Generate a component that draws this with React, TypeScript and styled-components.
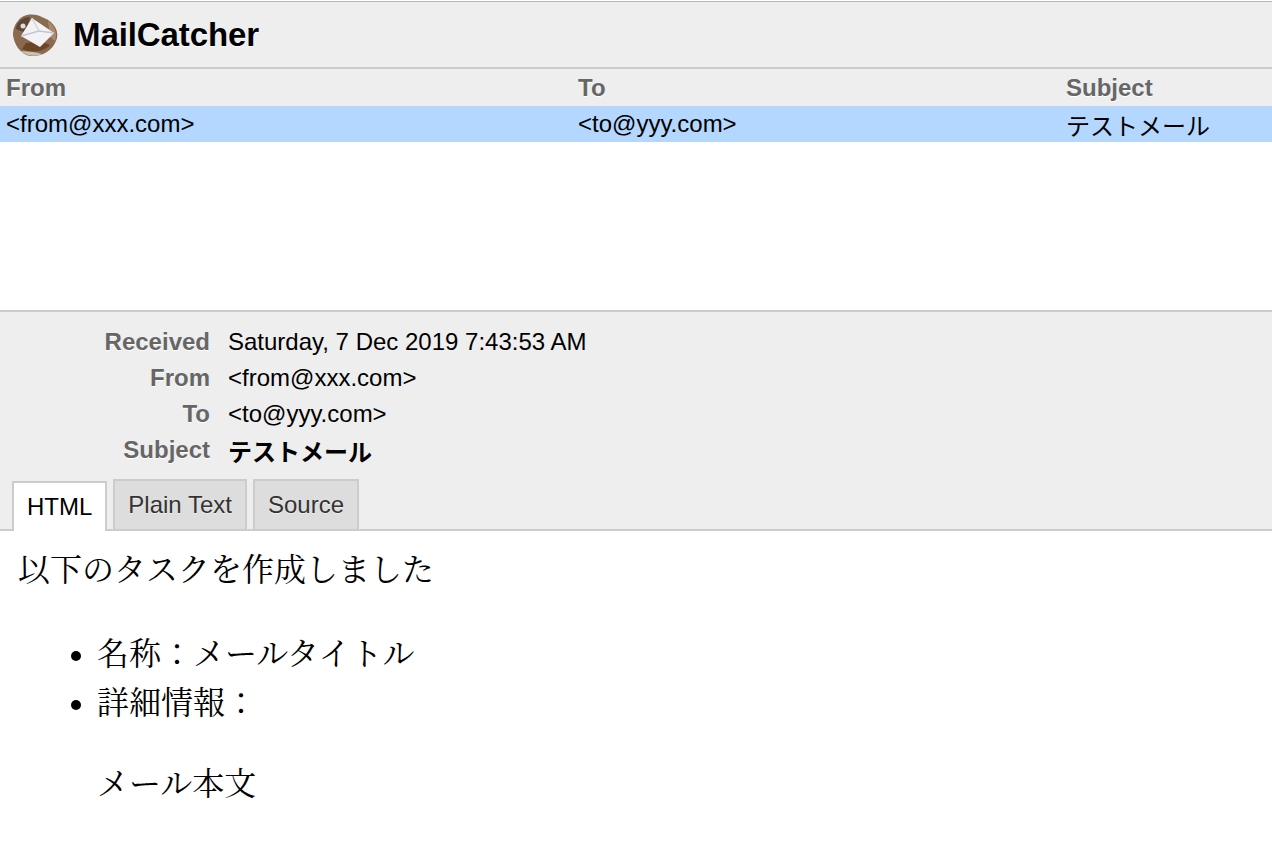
import React, { FC } from "react";
import styled, { createGlobalStyle } from "styled-components";

const GlobalStyle = createGlobalStyle`
  html, body {
    margin: 0;
    background: white;
    color: black;
    font-family: "Liberation Sans", "Noto Sans CJK JP", sans-serif;
  }
`;

const Page = styled.div`
  width: 1272px;
  height: 852px;
  overflow: hidden;
  display: flex;
  flex-direction: column;
`;

const Header = styled.header`
  height: 66px;
  margin-top: 1px;
  box-sizing: border-box;
  background: #eeeeee;
  border-top: 1px solid #b5b5b5;
  display: flex;
  align-items: center;
  gap: 13px;
  padding-left: 12px;
`;

const Title = styled.h1`
  margin: 0;
  font-size: 33px;
  font-weight: bold;
  letter-spacing: -0.1px;
  text-shadow: 0 1px 0 #ffffff;
`;

const ListArea = styled.section`
  height: 243px;
  box-sizing: border-box;
  border-top: 2px solid #cccccc;
  background: white;
`;

const columns = "572px 488px 1fr";

const ListHead = styled.div`
  display: grid;
  grid-template-columns: ${columns};
  height: 37px;
  align-items: center;
  background: #eeeeee;
`;

const HeadCell = styled.div`
  padding-left: 6px;
  font-size: 24px;
  font-weight: bold;
  color: #666666;
  text-shadow: 0 1px 0 #ffffff;
`;

const ListRow = styled.div`
  display: grid;
  grid-template-columns: ${columns};
  height: 36px;
  align-items: center;
  background: #b3d7ff;
`;

const RowCell = styled.div`
  padding-left: 6px;
  font-size: 24px;
`;

const Detail = styled.section`
  height: 221px;
  box-sizing: border-box;
  border-top: 2px solid #cccccc;
  background: #eeeeee;
  border-bottom: 2px solid #cccccc;
  display: flex;
  flex-direction: column;
  justify-content: space-between;
  padding-top: 12px;
`;

const Meta = styled.dl`
  margin: 0;
  display: grid;
  grid-template-columns: 210px 1fr;
  grid-auto-rows: 36px;
  column-gap: 18px;
  align-items: center;
`;

const MetaLabel = styled.dt`
  text-align: right;
  font-size: 24px;
  font-weight: bold;
  color: #666666;
  text-shadow: 0 1px 0 #ffffff;
`;

const MetaValue = styled.dd<{ $bold?: boolean }>`
  margin: 0;
  font-size: 24px;
  font-weight: ${(props) => (props.$bold ? "bold" : "normal")};
`;

const Tabs = styled.nav`
  display: flex;
  align-items: flex-end;
  gap: 6px;
  padding-left: 12px;
  margin-bottom: -2px;
`;

const Tab = styled.div<{ $active?: boolean }>`
  box-sizing: border-box;
  height: ${(props) => (props.$active ? "50px" : "52px")};
  padding: 0 13px;
  display: flex;
  align-items: center;
  font-size: 24px;
  border: 2px solid #cccccc;
  border-bottom: ${(props) => (props.$active ? "none" : "2px solid #cccccc")};
  background: ${(props) => (props.$active ? "#ffffff" : "#dddddd")};
  color: ${(props) => (props.$active ? "#000000" : "#333333")};
  text-shadow: ${(props) => (props.$active ? "none" : "0 1px 0 #eeeeee")};
`;

const Body = styled.main`
  flex: 1;
  padding: 19px 18px 0;
  font-family: "Liberation Serif", "Noto Serif CJK JP", "Noto Sans CJK JP", serif;
  font-size: 32px;
  line-height: 40px;
`;

const Para = styled.p`
  margin: 0;
`;

const List = styled.ul`
  margin: 40px 0 0;
  padding-left: 79px;
  line-height: 49px;
`;

const ListPara = styled.p`
  margin: 32px 0 0;
  line-height: 49px;
`;

const Logo: FC = () => (
  <svg width="48" height="48" viewBox="0 0 48 48">
    <path
      d="M6 10 C10 3 22 1 32 7 C43 11 48 22 44 30 C40 40 30 46 18 45 C8 43 2 33 1 24 C1 18 3 13 6 10Z"
      fill="#8a6a4e"
    />
    <path d="M4 18 C4 12 10 6 18 6 L14 22 Z" fill="#5b4638" />
    <path d="M10 38 C18 42 30 42 38 34 L28 30 L14 32 Z" fill="#6d4526" />
    <path d="M8 40 C14 45 24 46 30 43 L22 41 Z" fill="#c9c1ad" />
    <path d="M36 10 C42 14 46 22 43 30 L38 26 Z" fill="#a78a70" />
    <path d="M20 7 L42 22 L28 36 L9 25 Z" fill="#f3f2f4" />
    <path d="M9 25 L27 20 L42 22" fill="none" stroke="#c5c3cc" strokeWidth="1.5" />
    <path d="M20 7 L27 20" fill="none" stroke="#d5d3da" strokeWidth="1.5" />
    <circle cx="11" cy="15" r="2.5" fill="#e4ded4" />
  </svg>
);

const App: FC = () => {
  return (
    <Page>
      <GlobalStyle />
      <Header>
        <Logo />
        <Title>MailCatcher</Title>
      </Header>
      <ListArea>
        <ListHead>
          <HeadCell>From</HeadCell>
          <HeadCell>To</HeadCell>
          <HeadCell>Subject</HeadCell>
        </ListHead>
        <ListRow>
          <RowCell>&lt;from@xxx.com&gt;</RowCell>
          <RowCell>&lt;to@yyy.com&gt;</RowCell>
          <RowCell>テストメール</RowCell>
        </ListRow>
      </ListArea>
      <Detail>
        <Meta>
          <MetaLabel>Received</MetaLabel>
          <MetaValue>Saturday, 7 Dec 2019 7:43:53 AM</MetaValue>
          <MetaLabel>From</MetaLabel>
          <MetaValue>&lt;from@xxx.com&gt;</MetaValue>
          <MetaLabel>To</MetaLabel>
          <MetaValue>&lt;to@yyy.com&gt;</MetaValue>
          <MetaLabel>Subject</MetaLabel>
          <MetaValue $bold>テストメール</MetaValue>
        </Meta>
        <Tabs>
          <Tab $active>HTML</Tab>
          <Tab>Plain Text</Tab>
          <Tab>Source</Tab>
        </Tabs>
      </Detail>
      <Body>
        <Para>以下のタスクを作成しました</Para>
        <List>
          <li>名称：メールタイトル</li>
          <li>
            詳細情報：
            <ListPara>メール本文</ListPara>
          </li>
        </List>
      </Body>
    </Page>
  );
};

export default App;
